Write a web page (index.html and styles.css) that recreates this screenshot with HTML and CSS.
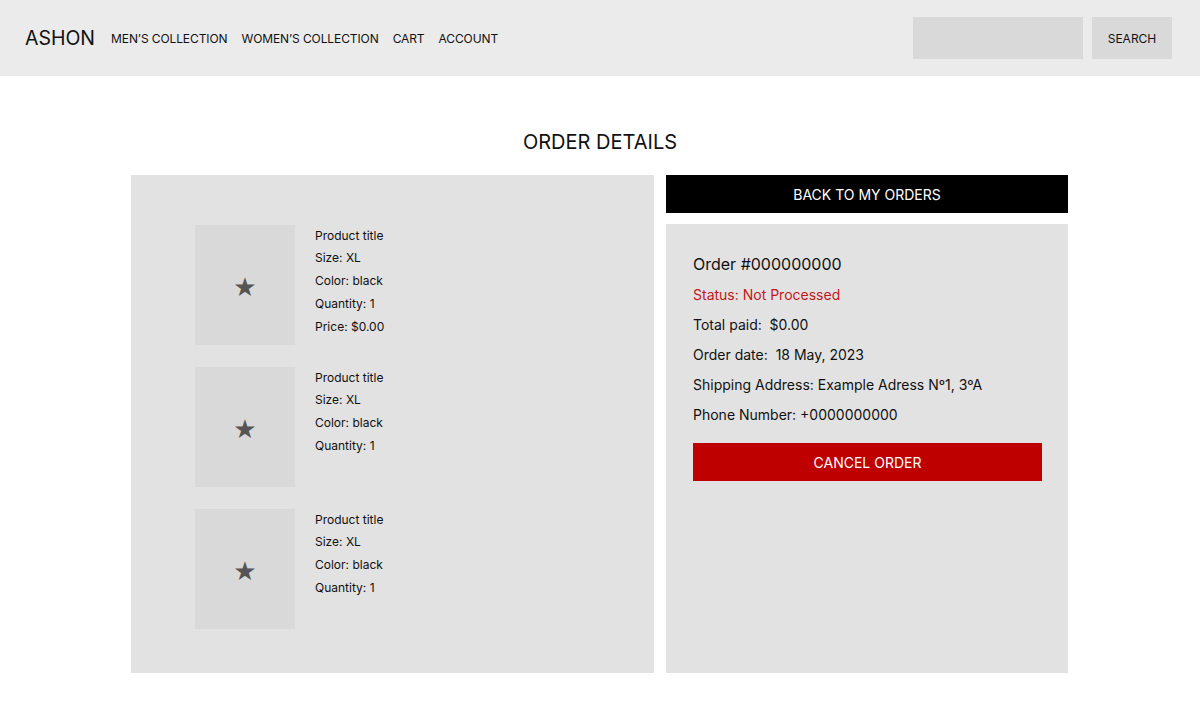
FILE: index.html
```html
<!DOCTYPE html>
<html lang="en">
<head>
<meta charset="utf-8">
<title>Order details</title>
<link rel="stylesheet" href="styles.css">
</head>
<body>
<header class="topbar">
  <div class="brand">ASHON</div>
  <nav class="nav">
    <a href="#">MEN’S COLLECTION</a>
    <a href="#">WOMEN’S COLLECTION</a>
    <a href="#">CART</a>
    <a href="#">ACCOUNT</a>
  </nav>
  <div class="search">
    <input class="search-input" type="text" aria-label="Search">
    <button class="search-btn">SEARCH</button>
  </div>
</header>

<main class="page">
  <h1 class="title">ORDER DETAILS</h1>
  <div class="layout">
    <section class="items">
      <div class="item">
        <div class="thumb">★</div>
        <div class="info">
          <div>Product title</div>
          <div>Size: XL</div>
          <div>Color: black</div>
          <div>Quantity: 1</div>
          <div>Price: $0.00</div>
        </div>
      </div>
      <div class="item">
        <div class="thumb">★</div>
        <div class="info">
          <div>Product title</div>
          <div>Size: XL</div>
          <div>Color: black</div>
          <div>Quantity: 1</div>
        </div>
      </div>
      <div class="item">
        <div class="thumb">★</div>
        <div class="info">
          <div>Product title</div>
          <div>Size: XL</div>
          <div>Color: black</div>
          <div>Quantity: 1</div>
        </div>
      </div>
    </section>
    <aside class="side">
      <button class="back-btn">BACK TO MY ORDERS</button>
      <div class="card">
        <div class="order-no">Order #000000000</div>
        <div class="line status">Status: Not Processed</div>
        <div class="line">Total paid:&nbsp; $0.00</div>
        <div class="line">Order date:&nbsp; 18 May, 2023</div>
        <div class="line">Shipping Address: Example Adress Nº1, 3ºA</div>
        <div class="line">Phone Number: +0000000000</div>
        <button class="cancel-btn">CANCEL ORDER</button>
      </div>
    </aside>
  </div>
</main>
</body>
</html>
```

FILE: styles.css
```css
* { box-sizing: border-box; }
html, body { margin: 0; padding: 0; }
body {
  font-family: Inter, "Noto Sans", sans-serif;
  color: #111;
  background: #fff;
}

.topbar {
  height: 76px;
  background: #ebebeb;
  display: flex;
  align-items: center;
  padding: 0 28px 0 25px;
}
.brand {
  font-size: 19.5px;
  color: #111;
  margin-right: 16px;
}
.nav {
  display: flex;
  gap: 14px;
  padding-top: 1px;
}
.nav a {
  font-size: 12px;
  letter-spacing: -0.1px;
  color: #111;
  text-decoration: none;
}
.search {
  margin-left: auto;
  display: flex;
  gap: 9px;
}
.search-input {
  width: 170px;
  height: 42px;
  border: 0;
  background: #d9d9d9;
  outline: none;
}
.search-btn {
  width: 80px;
  height: 42px;
  border: 0;
  background: #d9d9d9;
  font-family: inherit;
  font-size: 12px;
  padding-top: 2px;
  color: #111;
}

.page {
  padding-top: 54px;
}
.title {
  margin: 0 0 21px;
  text-align: center;
  font-weight: 400;
  font-size: 20px;
  line-height: 24px;
  color: #111;
}
.layout {
  display: flex;
  justify-content: center;
  gap: 12px;
  padding-right: 1px;
}
.items {
  width: 523px;
  height: 498px;
  background: #e2e2e2;
  padding: 50px 64px 0;
  display: flex;
  flex-direction: column;
  gap: 22px;
}
.item {
  display: flex;
  gap: 20px;
}
.thumb {
  width: 100px;
  height: 120px;
  background: #d9d9d9;
  display: flex;
  align-items: center;
  justify-content: center;
  font-size: 26px;
  padding-top: 3px;
  color: #555;
  font-family: "DejaVu Sans", sans-serif;
}
.info {
  font-size: 12px;
  line-height: 23px;
  color: #111;
}
.info div:first-child { line-height: 21px; }

.side {
  width: 402px;
  display: flex;
  flex-direction: column;
  gap: 11px;
}
.back-btn {
  height: 38px;
  border: 0;
  background: #000;
  color: #fff;
  font-family: inherit;
  font-size: 14px;
  width: 100%;
}
.card {
  flex: 1;
  background: #e2e2e2;
  padding: 24px 26px 0 27px;
}
.order-no {
  font-size: 16px;
  line-height: 32px;
}
.line {
  font-size: 14px;
  line-height: 30px;
}
.status { color: #c4161c; }
.cancel-btn {
  margin-top: 13px;
  width: 100%;
  height: 38px;
  border: 0;
  background: #bf0000;
  color: #fff;
  font-family: inherit;
  font-size: 14px;
}
```
